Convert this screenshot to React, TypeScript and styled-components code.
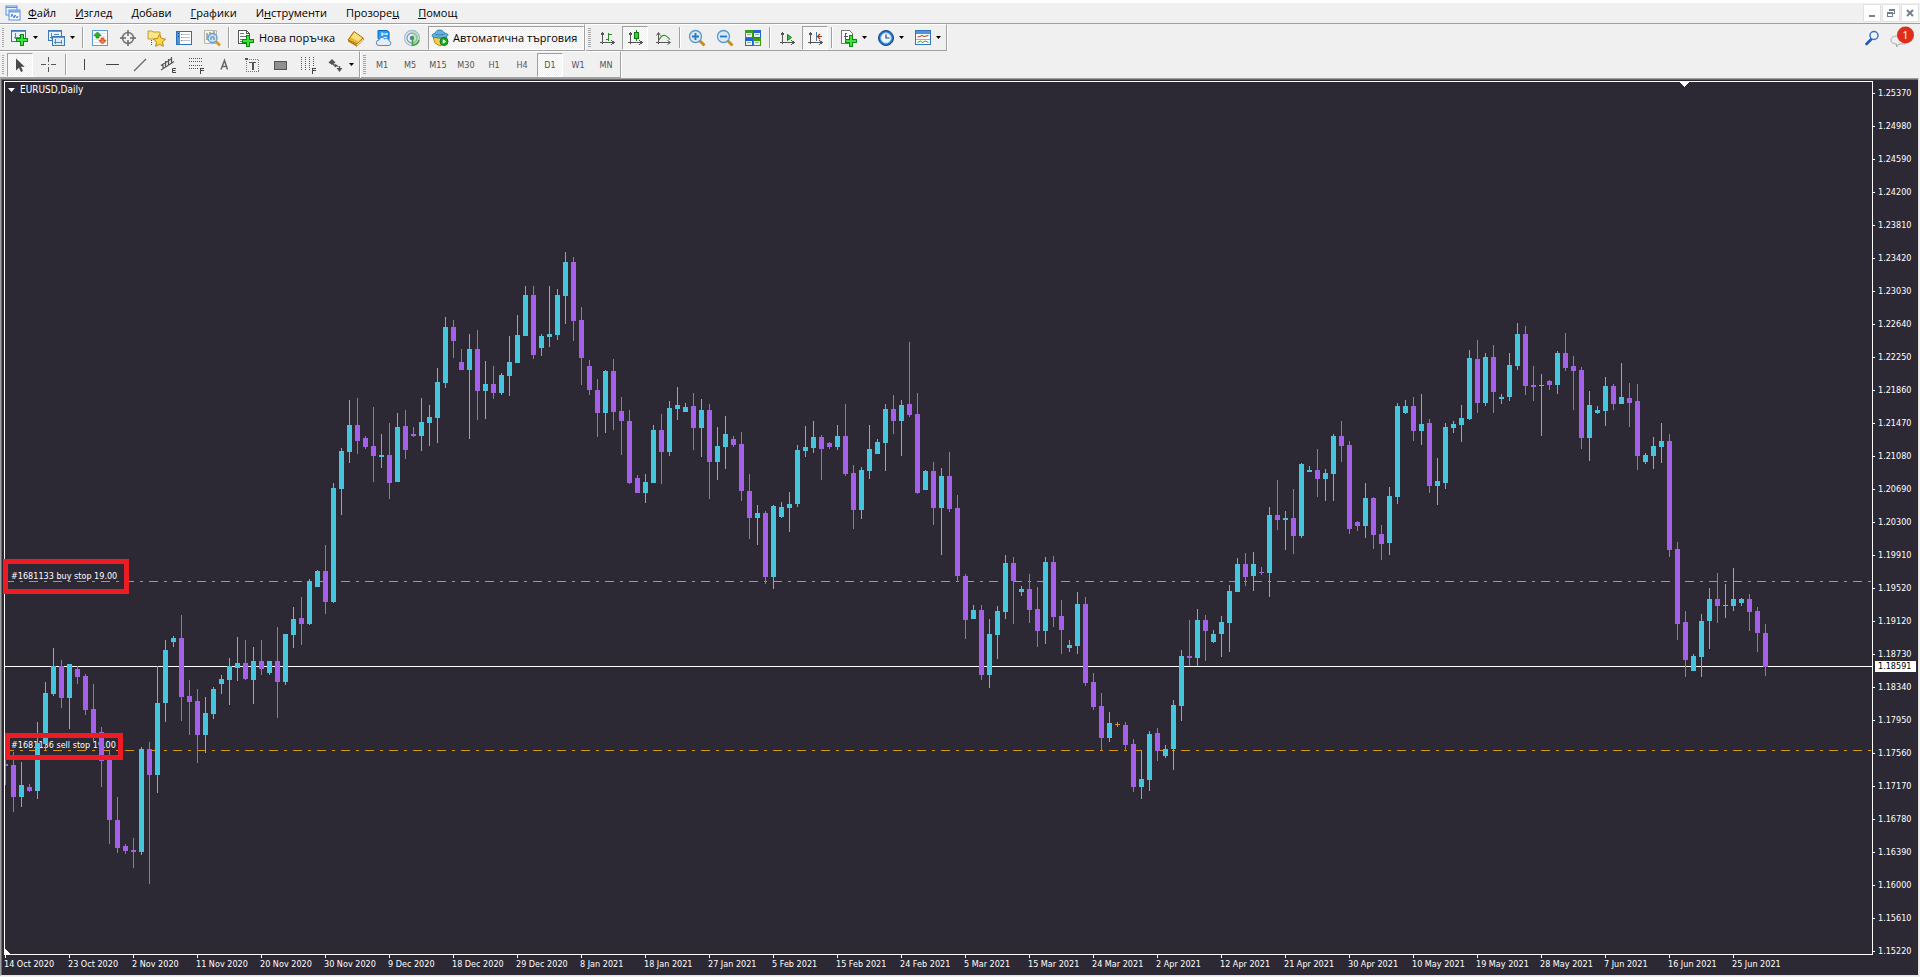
import React, { ReactNode } from 'react';
import styled, { createGlobalStyle, css } from 'styled-components';

const color = {
  face: '#f0f0f0',
  line: '#a0a0a0',
  ink: '#555555',
  chart: '#2c2935',
  bull: '#46c6de',
  bear: '#a45feb',
  order: '#d8960f',
  mark: '#ed1c24',
};

const chartFont = "'DejaVu Sans Condensed', 'DejaVu Sans', sans-serif";
const uiFont = "'Open Sans', 'Noto Sans', sans-serif";

const GlobalStyle = createGlobalStyle`
  *, *::before, *::after { box-sizing: border-box; }
  body { margin: 0; background: ${color.face}; font-family: ${uiFont}; }
  button { font: inherit; color: inherit; background: none; border: 0; padding: 0; margin: 0; }
  ul, ol { list-style: none; margin: 0; padding: 0; }
`;

/* ---------- window frame ---------- */

const Window = styled.div`
  display: flex;
  flex-direction: column;
  min-height: 100vh;
  border-top: 3px solid #fff;
`;

const MenuBar = styled.header`
  display: flex;
  align-items: center;
  height: 21px;
  padding-left: 5px;
  border-bottom: 1px solid ${color.line};
`;

const Menus = styled.nav`
  display: flex;
  flex: 1;
  gap: 19px;
  margin-left: 7px;
`;

const MenuButton = styled.button`
  font-size: 11px;
  line-height: 18px;
  color: #000;
`;

const WindowButtons = styled.div`
  display: flex;
  align-items: center;
  gap: 1px;
  margin-right: 1px;
`;

const WindowButton = styled.button`
  display: grid;
  place-items: center;
  width: 18px;
  height: 18px;
  background: #fff;
  border: 1px solid #e2e2e2;
`;

/* ---------- toolbars ---------- */

const ToolRow = styled.div`
  display: flex;
  height: 27px;
`;

const ToolGroup = styled.div`
  display: flex;
  align-items: center;
  margin-right: 1px;
  border-top: 1px solid #fff;
  border-bottom: 1px solid ${color.line};
  border-right: 1px solid ${color.line};
  box-shadow: 1px 0 0 #fff;
`;

const Grip = styled.span<{ $inset?: boolean }>`
  width: ${(p) => (p.$inset ? 7 : 6)}px;
  height: 20px;
  border-left: 2px solid transparent;
  background: repeating-linear-gradient(#a8a8a8 0 1px, transparent 1px 2px) padding-box;
  border-right: 2px solid transparent;
`;

const Divider = styled.span<{ $wide?: boolean }>`
  width: ${(p) => (p.$wide ? 8 : 6)}px;
  height: 21px;
  background: linear-gradient(90deg, ${color.line} 1px, #fff 1px) center / 2px 100% no-repeat;
`;

const pressed = css`
  background: conic-gradient(#fff 25%, #eee 0 50%, #fff 0 75%, #eee 0) 0 0 / 2px 2px;
  border: 1px solid ${color.line};
  border-right-color: #fff;
  border-bottom-color: #fff;
`;

const ToolButton = styled.button<{ $on?: boolean }>`
  display: grid;
  place-items: center;
  width: 26px;
  height: 24px;
  margin: 0 1px;
  border: 1px solid transparent;
  font: 9px/12px ${chartFont};
  color: ${color.ink};
  ${(p) => p.$on && pressed}
`;

const DropButton = styled.button`
  display: flex;
  align-items: center;
  gap: 4px;
  width: 37px;
  height: 24px;
  padding-left: 5px;
`;

const LabelButton = styled.button<{ $on?: boolean }>`
  display: flex;
  align-items: center;
  gap: 4px;
  height: 24px;
  padding: 0 2px 0 4px;
  font-size: 11px;
  line-height: 14px;
  white-space: nowrap;
  border: 1px solid transparent;
  color: #000;
  ${(p) => p.$on && pressed}
  ${(p) => (p.$on ? 'width: 156px; margin-left: 2px; padding-left: 2px;' : 'width: 110px;')}
`;

const Trailing = styled.div`
  display: flex;
  align-items: center;
  gap: 9px;
  margin: 0 6px 0 auto;
`;

const IconOnly = styled.button`
  display: block;
  height: 22px;
`;

const Glyph = styled.svg`
  display: block;
  flex: none;
  overflow: visible;
`;

const Icon = ({ children, size = 18, soft }: { children: ReactNode; size?: number; soft?: boolean }) => (
  <Glyph width={size} height={size} viewBox={`0 0 ${size} ${size}`} fill="none" aria-hidden="true"
    shapeRendering={soft ? 'auto' : 'crispEdges'}>
    {children}
  </Glyph>
);

const Arrow = () => (
  <Glyph width="5" height="3" viewBox="0 0 5 3" aria-hidden="true"><path d="M0 0h5L2.500 3z" fill="#000" /></Glyph>
);

/* ---------- icons ---------- */

const Plus = ({ x = 6, y = 6 }: { x?: number; y?: number }) => (
  <g transform={`translate(${x} ${y})`}>
    <path d="M4 0h4v4h4v4h-4v4h-4v-4h-4v-4h4z" fill="#0b8a12" />
    <path d="M5 1h2v4h4v2h-4v4h-2v-4h-4v-2h4z" fill="#3fe23c" />
  </g>
);

const Axes = () => <path d="M3.500 15V4M1.500 6.500L3.500 3.500l2 3M1 13.500h14M12.500 11.500l3 2-3 2" stroke="#555" />;

const icons = {
  logo: (
    <Icon size={16} soft>
      <rect x="1" y="1" width="11" height="9" fill="#e8f2ff" stroke="#5a8fdc" />
      <path d="M1 2.500h11" stroke="#5a8fdc" />
      <rect x="4" y="5" width="11" height="10" fill="#f4f9ff" stroke="#5a8fdc" />
      <path d="M4 6.500h11" stroke="#6f9fe4" strokeWidth="2" />
      <path d="M6 12l1-3 2 4 1-3 2 3 1-2" stroke="#4a80d4" />
    </Icon>
  ),
  newChart: (
    <Icon>
      <rect x=".5" y="1.500" width="14" height="11" fill="#eaf3fc" stroke="#3b78b8" />
      <path d="M1 2.500h13" stroke="#5b9ad8" />
      <path d="M4.500 4v6M3 8.500h9M8 6.500h4" stroke="#5a86b4" />
      <Plus x={5} y={5} />
    </Icon>
  ),
  profiles: (
    <Icon>
      <rect x=".5" y="1.500" width="13" height="10" fill="#eaf3fc" stroke="#3b78b8" />
      <path d="M1 2.500h12" stroke="#5b9ad8" />
      <path d="M3.500 4v6M2 8.500h5M6 5.500h5" stroke="#5a86b4" />
      <rect x="4.500" y="7.500" width="12" height="9" fill="#dcebfa" stroke="#3b78b8" />
      <path d="M5 8.500h11" stroke="#5b9ad8" />
      <path d="M7.500 10v5M6 13.500h8M13.500 11v4" stroke="#5a86b4" />
    </Icon>
  ),
  market: (
    <Icon>
      <rect x="1.500" y="1.500" width="15" height="15" rx="1" fill="#fff" stroke="#5b9bd8" />
      <path d="M3 4.500h12M3 7.500h12M3 10.500h12M3 13.500h12" stroke="#dde3ea" />
      <g shapeRendering="auto">
        <path d="M6.500 3L10 6.500H8V9H5V6.500H3z" fill="#2fb62c" stroke="#12800f" strokeWidth=".8" />
        <path d="M11.500 15L8 11.500h2V9h3v2.500h2z" fill="#f47a3c" stroke="#d23e10" strokeWidth=".8" />
      </g>
    </Icon>
  ),
  crosshair: (
    <Icon soft>
      <circle cx="9" cy="9" r="5.500" stroke="#777" strokeWidth="1.500" />
      <path d="M9 1v6M9 11v6M1 9h6M11 9h6" stroke="#666" strokeWidth="1.500" />
    </Icon>
  ),
  navigator: (
    <Icon soft>
      <path d="M1 2h4l1 1h7v7H1z" fill="#fbe58a" stroke="#c79a21" />
      <path d="M4.500 11v5" stroke="#555" strokeDasharray="1 1" />
      <path d="M12.500 5.500l2 4 4 .6-3 3 .8 4.200-3.800-2-3.800 2 .8-4.200-3-3 4-.6z" fill="#ffd94a" stroke="#b98512" />
    </Icon>
  ),
  terminal: (
    <Icon>
      <rect x="1.500" y="2.500" width="15" height="13" fill="#fff" stroke="#2c70b7" />
      <rect x="2" y="3" width="3" height="12" fill="#4b95dc" />
      <path d="M3.500 4v1M3.500 7v1" stroke="#103b70" />
      <path d="M7 5.500h8M7 8.500h8M7 11.500h8" stroke="#b9c4d0" />
      <path d="M6 5.500h1M6 8.500h1M6 11.500h1" stroke="#e25a3a" />
    </Icon>
  ),
  tester: (
    <Icon soft>
      <path d="M1.500 1.500h12v13h-12z" fill="#f4f4f0" stroke="#b7b7ad" />
      <path d="M4 4v7M7 3v5M11 2v5" stroke="#666" />
      <circle cx="9.500" cy="9" r="4.500" fill="#bfe0f7" fillOpacity=".85" stroke="#6b9dc8" strokeWidth="1.300" />
      <path d="M13 12.500l4 4" stroke="#d79a1c" strokeWidth="2.600" />
      <path d="M8 11V8h3v3" stroke="#5c7f9f" />
    </Icon>
  ),
  order: (
    <Icon>
      <path d="M1.500 1.500h8l3 3v10h-11z" fill="#fff" stroke="#555" />
      <path d="M9.500 1.500v3h3" stroke="#555" />
      <path d="M3 4.500h4M3 7.500h7M3 10.500h3M3 12.500h2" stroke="#777" />
      <Plus x={5} y={6} />
    </Icon>
  ),
  editor: (
    <Icon soft>
      <path d="M1 11L7 2.500l9 6.500-6 6z" fill="#e9b52d" stroke="#a36d08" />
      <path d="M4 8.500L7.500 3.500 15 9l-3.500 3.500z" fill="#fbe07c" />
      <path d="M1 11v1.500L9.500 17.500V15.500z" fill="#b67b10" />
      <path d="M9.500 15.500L16.500 9v2L9.500 17.500z" fill="#fff2c0" stroke="#a36d08" strokeWidth=".6" />
    </Icon>
  ),
  vps: (
    <Icon soft>
      <path d="M3 1.500h9l2 1.500v8H5L3 9.500z" fill="#2b9cf0" stroke="#0c67c0" />
      <path d="M7 3.500v3.500M7 5h5M12 4v2M7 8.500h5" stroke="#fff" strokeWidth="1.200" />
      <path d="M4 16.500a2.700 2.700 0 010-5.400 3 3 0 015.500-1.300 3 3 0 014.500 2 2.400 2.400 0 010 4.700z" fill="#e3edf8" stroke="#5f86b4" />
    </Icon>
  ),
  signals: (
    <Icon soft>
      <circle cx="9" cy="9" r="7.500" stroke="#a9bfd2" strokeWidth="1.300" />
      <circle cx="9" cy="9" r="5" stroke="#7da2c4" strokeWidth="1.400" />
      <path d="M9 1.500a7.500 7.500 0 010 15z" fill="#9bd39b" fillOpacity=".5" />
      <circle cx="9" cy="9" r="2.200" fill="#4a83ab" />
      <path d="M9.500 9v8M9.500 16.300a7.500 7.500 0 006.500-5" stroke="#3da33c" strokeWidth="1.600" />
    </Icon>
  ),
  expert: (
    <Icon soft>
      <path d="M2 8h14l-3 6-4 3-5-3z" fill="#f7cf4b" stroke="#bf8a17" />
      <path d="M1 6.500c0-1.500 3-2 3.500-3S6 1 8.500 1s4 1.500 4.500 2.500 4 1 4 2.500S13 9 9 9 1 8 1 6.500z" fill="#62b4e0" stroke="#2d7fae" />
      <path d="M4.500 5c2 1.400 6 1.400 8.500 0" stroke="#2d7fae" />
      <circle cx="13" cy="12.500" r="4" fill="#1faa1f" stroke="#0d7a10" />
      <path d="M11.800 10.200v4.600l3.400-2.300z" fill="#fff" />
    </Icon>
  ),
  bars: <Icon size={17}><Axes /><path d="M9.500 4v8M9.500 5.500h3M7 10.500h2" stroke="#1f8f1f" strokeWidth="1" /></Icon>,
  candles: (
    <Icon size={17}><Axes /><path d="M9.500 1v11" stroke="#137813" /><rect x="7.500" y="3.500" width="4" height="6" fill="#2fd42f" stroke="#137813" /></Icon>
  ),
  lineChart: <Icon size={17} soft><Axes /><path d="M4 11c2-4 4-5 6-4.500s3 2 5 4" stroke="#2a9a2a" strokeWidth="1.200" /></Icon>,
  zoomIn: (
    <Icon soft>
      <path d="M11.500 11.500l5 5" stroke="#c98f16" strokeWidth="3" />
      <circle cx="7.500" cy="7.500" r="6" fill="#d5ebfb" stroke="#5b96cc" strokeWidth="1.300" />
      <path d="M4 7.500h7M7.500 4v7" stroke="#2a76b8" strokeWidth="1.800" />
    </Icon>
  ),
  zoomOut: (
    <Icon soft>
      <path d="M11.500 11.500l5 5" stroke="#c98f16" strokeWidth="3" />
      <circle cx="7.500" cy="7.500" r="6" fill="#d5ebfb" stroke="#5b96cc" strokeWidth="1.300" />
      <path d="M4 7.500h7" stroke="#2a76b8" strokeWidth="1.800" />
    </Icon>
  ),
  tile: (
    <Icon>
      <path d="M1 1h8v8H1zM9 9h8v8H9z" fill="#3a9d16" />
      <path d="M9 1h8v8H9zM1 9h8v8H1z" fill="#2365d0" />
      <path d="M2 4h6v4H2zM10 4h6v4h-6zM2 12h6v4H2zM10 12h6v4h-6z" fill="#e9f3ea" />
      <path d="M3 5.500h4M11 5.500h4M3 13.500h4M11 13.500h4" stroke="#8fb4a8" />
    </Icon>
  ),
  autoScroll: <Icon size={17}><Axes /><path d="M8.500 5.500v6l4-3z" fill="#35c435" stroke="#137813" shapeRendering="auto" /></Icon>,
  shift: (
    <Icon size={17}><Axes /><path d="M9.500 3v9" stroke="#4a79a8" /><path d="M15 7.500h-4M13 5l-2.500 2.500L13 10" stroke="#b2330e" strokeWidth="1.200" shapeRendering="auto" /></Icon>
  ),
  indicators: (
    <Icon>
      <path d="M1.500 1.500h8l3 3v10h-11z" fill="#fff" stroke="#777" />
      <path d="M7 4.500c-2-.5-2 1-2 3v4M3.500 7.500h4" stroke="#555" />
      <Plus x={5} y={6} />
    </Icon>
  ),
  clock: (
    <Icon soft>
      <circle cx="9" cy="9" r="7.500" fill="#1f6fc4" stroke="#124b8c" />
      <circle cx="9" cy="9" r="5.300" fill="#eef6fd" stroke="#7fb7ea" />
      <path d="M9 5.500V9h3.500" stroke="#24476b" strokeWidth="1.200" />
    </Icon>
  ),
  template: (
    <Icon>
      <rect x="1.500" y="1.500" width="15" height="14" fill="#fff" stroke="#3173b8" />
      <rect x="2" y="2" width="14" height="3" fill="#4f97dd" />
      <path d="M2 10.500h14" stroke="#8fb4dc" />
      <path d="M3.500 8l2.500-.5 2-1 2 1 4.500-1" stroke="#b2330e" shapeRendering="auto" />
      <path d="M3.500 13.500l3-1.500 2 1.500 3-1.500 3 1.500" stroke="#2a9a2a" shapeRendering="auto" />
    </Icon>
  ),
  cursor: <Icon soft><path d="M5 2.500v12l3-2.800 2 4.300 2-1-2-4.200h3.700z" fill="#4a4a4a" /></Icon>,
  cross: <Icon size={17}><path d="M8.500 1v5M8.500 11v5M1 8.500h5M11 8.500h5M8.500 8v1" stroke="#555" /></Icon>,
  vline: <Icon size={17}><path d="M8.500 3v11" stroke="#444" /></Icon>,
  hline: <Icon size={17}><path d="M2 8.500h13" stroke="#444" /></Icon>,
  trend: <Icon size={17} soft><path d="M2 15L14 3" stroke="#666" strokeWidth="1.200" /></Icon>,
  channel: (
    <Icon soft>
      <path d="M2 9.500L13 2.500M2 14L15 5.500M4 13V8M6.500 12V5M9.500 9V3M12.500 8V1" stroke="#555" strokeWidth="1.200" />
      <path d="M17 12.500h-3.500v4H17M13.500 14.500h3" stroke="#444" />
    </Icon>
  ),
  fibo: (
    <Icon>
      <path d="M2 2.500h14M2 5.500h14M2 9.500h14M2 12.500h9" stroke="#555" strokeDasharray="1 1" />
      <path d="M17 12.500h-3.500v5M13.500 14.500h3" stroke="#444" />
    </Icon>
  ),
  text: <Icon soft><path d="M6 13.500L9.500 4.500l3 9M7 10.500h4.500" stroke="#666" strokeWidth="1.500" /></Icon>,
  label: (
    <Icon>
      <rect x="3.500" y="3.500" width="12" height="12" stroke="#777" strokeDasharray="1 1" />
      <path d="M6 6.500h7" stroke="#555" strokeWidth="1" />
      <path d="M9.500 6v8" stroke="#555" strokeWidth="2" />
      <path d="M2 2h3v2H2z" fill="#555" />
    </Icon>
  ),
  rect: <Icon><rect x="3.500" y="5.500" width="12" height="8" rx="1" fill="#909090" stroke="#555" /></Icon>,
  cycles: (
    <Icon>
      <path d="M2.500 1v14M6.500 1v14M10.500 1v14M14.500 1v9" stroke="#555" strokeDasharray="1 1" />
      <path d="M17 12.500h-3.500v5M13.500 14.500h3" stroke="#444" />
    </Icon>
  ),
  arrows: (
    <Icon soft>
      <path d="M5 3l3.500 3.500L5 9 1.500 6.500z" fill="#555" />
      <path d="M9.500 12h6L12.500 16z" fill="#555" />
      <path d="M6 8l3 3M8 8.500l3 2M12.500 10v3" stroke="#555" strokeWidth="1.400" />
    </Icon>
  ),
};

/* ---------- menus and tools ---------- */

const menus: [string, string, string][] = [
  ['', 'Ф', 'айл'], ['', 'И', 'зглед'], ['', 'Д', 'обави'], ['', 'Г', 'рафики'],
  ['И', 'н', 'струменти'], ['Прозоре', 'ц', ''], ['', 'П', 'омощ'],
];

const timeframes = ['M1', 'M5', 'M15', 'M30', 'H1', 'H4', 'D1', 'W1', 'MN'];

/* ---------- chart data: type, high, body top, body bottom, low ---------- */

const series = `p758,764,766,785 p752,765,797,812 c762,785,797,807 p784,787,791,792 c722,743,791,799 c682,693,744,750
c648,666,694,696 p660,666,698,708 c664,664,698,729 p666,669,677,684 p674,676,710,715 p684,709,737,743 p727,732,761,787
p751,758,820,844 p797,820,848,853 p844,846,851,854 p838,850,852,868 c747,749,852,855 p742,749,775,884 c666,703,775,793
c640,650,703,722 c636,638,642,647 p615,638,697,721 p680,696,702,735 p689,701,735,763 c697,713,735,753 c687,689,714,719
c675,679,684,694 c658,666,680,705 c637,663,668,681 p640,663,679,680 c647,661,680,704 p640,661,669,675 c661,661,673,675
p627,661,682,718 c634,634,682,685 c607,619,635,648 p597,618,624,645 c579,581,624,625 c570,571,587,587 p545,571,602,614
c483,488,602,603 c448,451,489,515 c400,425,452,463 p398,425,441,454 p436,438,447,449 p407,446,456,482 c434,455,457,468
p423,455,483,499 c413,427,482,482 p410,426,450,459 p427,434,436,437 c398,422,436,451 c405,417,423,446 c368,382,418,443
c317,327,383,388 p320,327,341,358 p349,362,370,370 c334,349,370,439 p330,349,391,420 c361,384,391,419 p366,384,393,399
c373,375,393,395 c336,362,376,396 c315,335,363,363 c286,295,336,336 p286,295,355,359 c334,336,348,356 c286,334,337,347
c289,295,335,340 c252,262,296,324 p257,262,321,341 p307,320,358,385 p360,366,390,395 p379,390,413,437 c370,371,413,433
p359,371,412,430 p397,411,421,455 p410,421,483,484 p475,478,493,493 c474,482,493,503 c425,430,483,483 p414,430,452,484
c401,408,452,456 c387,405,409,420 c403,407,412,412 p393,406,428,450 c399,410,428,457 p404,410,462,499 c427,446,462,480
c416,434,447,469 p436,439,445,447 p432,444,491,501 p474,491,518,539 c505,513,518,545 p511,513,577,584 c505,506,577,589
c502,507,517,518 c492,504,508,532 c445,450,504,507 c426,447,451,457 c421,437,448,453 p435,437,449,480 p442,443,447,449
c425,436,447,450 p404,436,474,476 p465,473,510,529 c467,470,510,519 c425,449,471,479 c439,442,454,454 c404,409,443,471
p395,409,421,434 c400,405,421,456 p342,404,415,417 p393,414,493,494 c470,471,490,490 p462,471,508,525 c468,476,508,555
p452,476,509,512 p495,508,576,582 p574,576,620,639 c605,610,619,619 p605,610,675,680 c619,634,675,688 c606,611,635,659
c555,563,612,619 p557,563,581,624 c586,589,592,596 p574,589,610,623 p587,609,631,647 c557,562,631,644 p556,562,617,627
p600,616,630,654 c640,645,648,652 c592,604,646,654 p597,604,683,686 p673,682,707,710 p693,706,738,750 c712,723,738,742
o722,724,725,727 p722,725,745,751 p739,744,787,792 c750,779,787,799 c731,734,780,791 p728,733,751,761 c745,749,756,758
c700,705,749,770 c650,656,706,721 p620,656,658,666 c609,620,658,666 p615,620,631,661 c630,634,642,643 c616,622,634,657
c585,591,623,652 c558,564,592,592 p553,564,577,586 c552,564,576,591 p567,572,573,575 c507,515,573,597 p480,515,520,530
c511,518,520,550 p489,518,536,554 c463,464,536,538 c466,470,472,472 p449,470,479,497 c469,473,479,501 c434,436,474,501
p421,436,446,462 p441,445,529,534 p521,522,526,531 c483,498,526,538 p497,498,535,549 p525,534,544,560 c487,496,543,555
c403,406,497,504 c400,406,413,414 p397,406,431,441 c394,424,431,445 p419,423,486,493 c458,481,486,505 c423,427,483,489
c421,424,428,433 c405,418,425,442 c350,358,419,420 p340,359,403,413 c353,357,403,406 p345,357,392,413 c394,397,399,404
c353,365,397,401 c323,334,366,370 p326,334,386,395 p366,385,387,401 c374,385,386,436 p380,381,385,390 c351,353,385,394
p333,353,368,371 p356,366,371,410 p367,370,438,449 c391,405,438,461 c406,410,413,414 c377,386,411,426 p384,386,404,410
c363,397,404,404 p383,398,403,427 p384,401,456,470 c453,455,462,464 c437,446,456,469 c423,441,447,463 p434,441,550,557
p542,549,624,640 p611,622,660,677 c654,656,671,671 c614,621,657,677 c588,599,621,649 p573,599,606,623 c584,605,606,618
c568,599,606,611 c598,599,603,606 p594,599,612,631 p607,611,633,652 p624,633,667,676`;

const candles = series.split(/\s+/).map((item) => ({
  fill: item[0] === 'c' ? color.bull : item[0] === 'p' ? color.bear : color.order,
  y: item.slice(1).split(',').map(Number),
}));

const prices = [
  '1.25370', '1.24980', '1.24590', '1.24200', '1.23810', '1.23420', '1.23030', '1.22640', '1.22250',
  '1.21860', '1.21470', '1.21080', '1.20690', '1.20300', '1.19910', '1.19520', '1.19120', '1.18730',
  '1.18340', '1.17950', '1.17560', '1.17170', '1.16780', '1.16390', '1.16000', '1.15610', '1.15220',
];

const dates = [
  '14 Oct 2020', '23 Oct 2020', '2 Nov 2020', '11 Nov 2020', '20 Nov 2020', '30 Nov 2020', '9 Dec 2020',
  '18 Dec 2020', '29 Dec 2020', '8 Jan 2021', '18 Jan 2021', '27 Jan 2021', '5 Feb 2021', '15 Feb 2021',
  '24 Feb 2021', '5 Mar 2021', '15 Mar 2021', '24 Mar 2021', '2 Apr 2021', '12 Apr 2021', '21 Apr 2021',
  '30 Apr 2021', '10 May 2021', '19 May 2021', '28 May 2021', '7 Jun 2021', '16 Jun 2021', '25 Jun 2021',
];

/* ---------- chart ---------- */

const ChartWindow = styled.main`
  display: grid;
  grid-template-columns: minmax(0, 1fr) 45px;
  grid-template-rows: minmax(874px, 1fr) 20px;
  flex: 1;
  background: ${color.chart};
  border: 1px solid #e3e3e3;
  border-top-color: ${color.line};
  border-left-color: ${color.line};
  box-shadow: inset 1px 1px 0 #696969;
  padding: 1px 0 0 1px;
  margin-bottom: 1px;
  margin-right: 1px;
  font: 9px/13px ${chartFont};
  color: #fff;
`;

const Plot = styled.section`
  position: relative;
  margin: 1px 0 0 2px;
  border: 1px solid #fff;
`;

const Drawing = styled.svg`
  display: block;
  position: absolute;
  inset: 0;
  width: 100%;
  height: 100%;
`;

const Caption = styled.h1`
  position: absolute;
  left: 3px;
  top: 1px;
  display: flex;
  align-items: center;
  gap: 5px;
  margin: 0;
  font-size: 10px;
  font-weight: 400;
  line-height: 14px;
`;

const PriceScale = styled.aside`
  position: relative;
  grid-column: 2;
  grid-row: 1 / 3;
`;

const PriceList = styled.ul`
  display: flex;
  flex-direction: column;
  gap: 20px;
  padding-top: 7px;
`;

const Price = styled.li`
  display: flex;
  align-items: center;
  gap: 3px;
  height: 13px;
  &::before { content: ''; width: 2px; height: 1px; background: #fff; }
`;

const CurrentPrice = styled.output`
  position: absolute;
  left: 2px;
  right: 2px;
  top: 581px;
  height: 11px;
  padding-left: 3px;
  line-height: 11px;
  color: #000;
  background: #fff;
`;

const DateScale = styled.ol`
  display: flex;
  padding-left: 2px;
  overflow: hidden;
`;

const DateItem = styled.li`
  flex: none;
  width: 64px;
  white-space: nowrap;
  &::before { content: ''; display: block; width: 1px; height: 3px; margin-left: 1px; background: #fff; }
`;

const Candle = ({ index, fill, y }: { index: number; fill: string; y: number[] }) => {
  const x = 5 + index * 8;
  return (
    <g fill={fill}>
      <rect x={x} y={y[0]} width="1" height={y[3] - y[0]} />
      <rect x={x - 2} y={y[1]} width="5" height={y[2] - y[1]} />
    </g>
  );
};

const PlotDrawing = () => (
  <Drawing role="img" aria-label="EURUSD Daily candlestick chart" fontSize="9">
    <g transform="translate(-5 -82)" shapeRendering="crispEdges">
      <g stroke={color.order} strokeDasharray="9 6 3 6">
        <line x1="5" x2="4000" y1="581.5" y2="581.5" />
        <line x1="5" x2="4000" y1="750.5" y2="750.5" />
      </g>
      <line x1="5" x2="4000" y1="666.5" y2="666.5" stroke="#fff" />
      <text x="11" y="579" fill="#fff">#1681133 buy stop 19.00</text>
      <text x="11" y="748" fill="#fff">#1681136 sell stop 19.00</text>
      {candles.map((c, i) => <Candle key={i} index={i} {...c} />)}
      <path d="M5 949v5h5z" fill="#fff" />
      <path d="M1679 82h11l-5.500 5z" fill="#fff" />
    </g>
  </Drawing>
);

const OrderMark = styled.span<{ $kind: 'buy' | 'sell' }>`
  position: absolute;
  border: 5px solid ${color.mark};
  ${(p) => (p.$kind === 'buy'
    ? 'left: -2px; top: 477px; width: 126px; height: 35px;'
    : 'left: 0; top: 651px; width: 118px; height: 27px;')}
`;

/* ---------- page ---------- */

export default function App() {
  return (
    <Window>
      <GlobalStyle />
      <MenuBar>
        {icons.logo}
        <Menus aria-label="Меню">
          {menus.map(([before, key, after]) => (
            <MenuButton key={before + key + after}>{before}<u>{key}</u>{after}</MenuButton>
          ))}
        </Menus>
        <WindowButtons>
          <WindowButton aria-label="Minimize">
            <Icon size={10}><path d="M2 7h6v2H2z" fill="#75808b" /></Icon>
          </WindowButton>
          <WindowButton aria-label="Restore">
            <Icon size={10}><path d="M3.500 3V1.500h5v4H7M3 2.500h5.500M1.500 4.500h5v4h-5zM1 5.500h6" stroke="#75808b" /></Icon>
          </WindowButton>
          <WindowButton aria-label="Close">
            <Icon size={10} soft><path d="M2 2l6 6M8 2L2 8" stroke="#75808b" strokeWidth="2" /></Icon>
          </WindowButton>
        </WindowButtons>
      </MenuBar>

      <ToolRow>
        <ToolGroup role="toolbar" aria-label="Standard">
          <Grip />
          <DropButton aria-label="New chart">{icons.newChart}<Arrow /></DropButton>
          <DropButton aria-label="Profiles">{icons.profiles}<Arrow /></DropButton>
          <Divider />
          <ToolButton aria-label="Market watch">{icons.market}</ToolButton>
          <ToolButton aria-label="Data window">{icons.crosshair}</ToolButton>
          <ToolButton aria-label="Navigator">{icons.navigator}</ToolButton>
          <ToolButton aria-label="Terminal">{icons.terminal}</ToolButton>
          <ToolButton aria-label="Strategy tester">{icons.tester}</ToolButton>
          <Divider />
          <LabelButton>{icons.order}Нова поръчка</LabelButton>
          <ToolButton aria-label="MetaEditor">{icons.editor}</ToolButton>
          <ToolButton aria-label="VPS">{icons.vps}</ToolButton>
          <ToolButton aria-label="Signals">{icons.signals}</ToolButton>
          <LabelButton $on aria-pressed="true">{icons.expert}Автоматична търговия</LabelButton>
        </ToolGroup>
        <ToolGroup role="toolbar" aria-label="Charts">
          <Grip $inset />
          <ToolButton aria-label="Bar chart">{icons.bars}</ToolButton>
          <ToolButton $on aria-pressed="true" aria-label="Candlesticks">{icons.candles}</ToolButton>
          <ToolButton aria-label="Line chart">{icons.lineChart}</ToolButton>
          <Divider />
          <ToolButton aria-label="Zoom in">{icons.zoomIn}</ToolButton>
          <ToolButton aria-label="Zoom out">{icons.zoomOut}</ToolButton>
          <ToolButton aria-label="Tile windows">{icons.tile}</ToolButton>
          <Divider />
          <ToolButton aria-label="Auto scroll">{icons.autoScroll}</ToolButton>
          <ToolButton $on aria-pressed="true" aria-label="Chart shift">{icons.shift}</ToolButton>
          <Divider />
          <DropButton aria-label="Indicators">{icons.indicators}<Arrow /></DropButton>
          <DropButton aria-label="Periods">{icons.clock}<Arrow /></DropButton>
          <DropButton aria-label="Templates">{icons.template}<Arrow /></DropButton>
        </ToolGroup>
        <Trailing>
          <IconOnly aria-label="Search">
            <Icon soft>
              <path d="M9 9.500L3.500 15" stroke="#2457b8" strokeWidth="2.600" strokeLinecap="round" />
              <circle cx="11" cy="6.500" r="4" fill="#eef5ff" stroke="#3a6fd0" strokeWidth="1.500" />
            </Icon>
          </IconOnly>
          <IconOnly aria-label="Notifications">
            <Glyph width="24" height="22" viewBox="0 0 24 22" aria-hidden="true">
              <path d="M7 9h8v8H9l-2.500 3v-3C3 17 1 15.500 1 13s3-4 6-4z" fill="#eee" stroke="#aaa" />
              <circle cx="15.500" cy="8" r="8.500" fill="#dd2f1a" />
              <text x="15.500" y="12" textAnchor="middle" fontSize="11" fill="#fff">1</text>
            </Glyph>
          </IconOnly>
        </Trailing>
      </ToolRow>

      <ToolRow>
        <ToolGroup role="toolbar" aria-label="Line studies">
          <Grip />
          <ToolButton $on aria-pressed="true" aria-label="Cursor">{icons.cursor}</ToolButton>
          <ToolButton aria-label="Crosshair">{icons.cross}</ToolButton>
          <Divider $wide />
          <ToolButton aria-label="Vertical line">{icons.vline}</ToolButton>
          <ToolButton aria-label="Horizontal line">{icons.hline}</ToolButton>
          <ToolButton aria-label="Trendline">{icons.trend}</ToolButton>
          <ToolButton aria-label="Channel">{icons.channel}</ToolButton>
          <ToolButton aria-label="Fibonacci">{icons.fibo}</ToolButton>
          <ToolButton aria-label="Text">{icons.text}</ToolButton>
          <ToolButton aria-label="Text label">{icons.label}</ToolButton>
          <ToolButton aria-label="Rectangle">{icons.rect}</ToolButton>
          <ToolButton aria-label="Time zones">{icons.cycles}</ToolButton>
          <DropButton aria-label="Arrows">{icons.arrows}<Arrow /></DropButton>
        </ToolGroup>
        <ToolGroup role="toolbar" aria-label="Timeframes">
          <Grip $inset />
          {timeframes.map((t) => (
            <ToolButton key={t} $on={t === 'D1'} aria-pressed={t === 'D1'}>{t}</ToolButton>
          ))}
        </ToolGroup>
      </ToolRow>

      <ChartWindow>
        <Plot>
          <PlotDrawing />
          <Caption>
            <Glyph width="7" height="4" viewBox="0 0 7 4" aria-hidden="true"><path d="M0 0h7L3.500 4z" fill="#fff" /></Glyph>
            EURUSD,Daily
          </Caption>
          <OrderMark $kind="buy" />
          <OrderMark $kind="sell" />
        </Plot>
        <PriceScale>
          <PriceList>
            {prices.map((p) => <Price key={p}>{p}</Price>)}
          </PriceList>
          <CurrentPrice>1.18591</CurrentPrice>
        </PriceScale>
        <DateScale>
          {dates.map((d) => <DateItem key={d}>{d}</DateItem>)}
        </DateScale>
      </ChartWindow>
    </Window>
  );
}
